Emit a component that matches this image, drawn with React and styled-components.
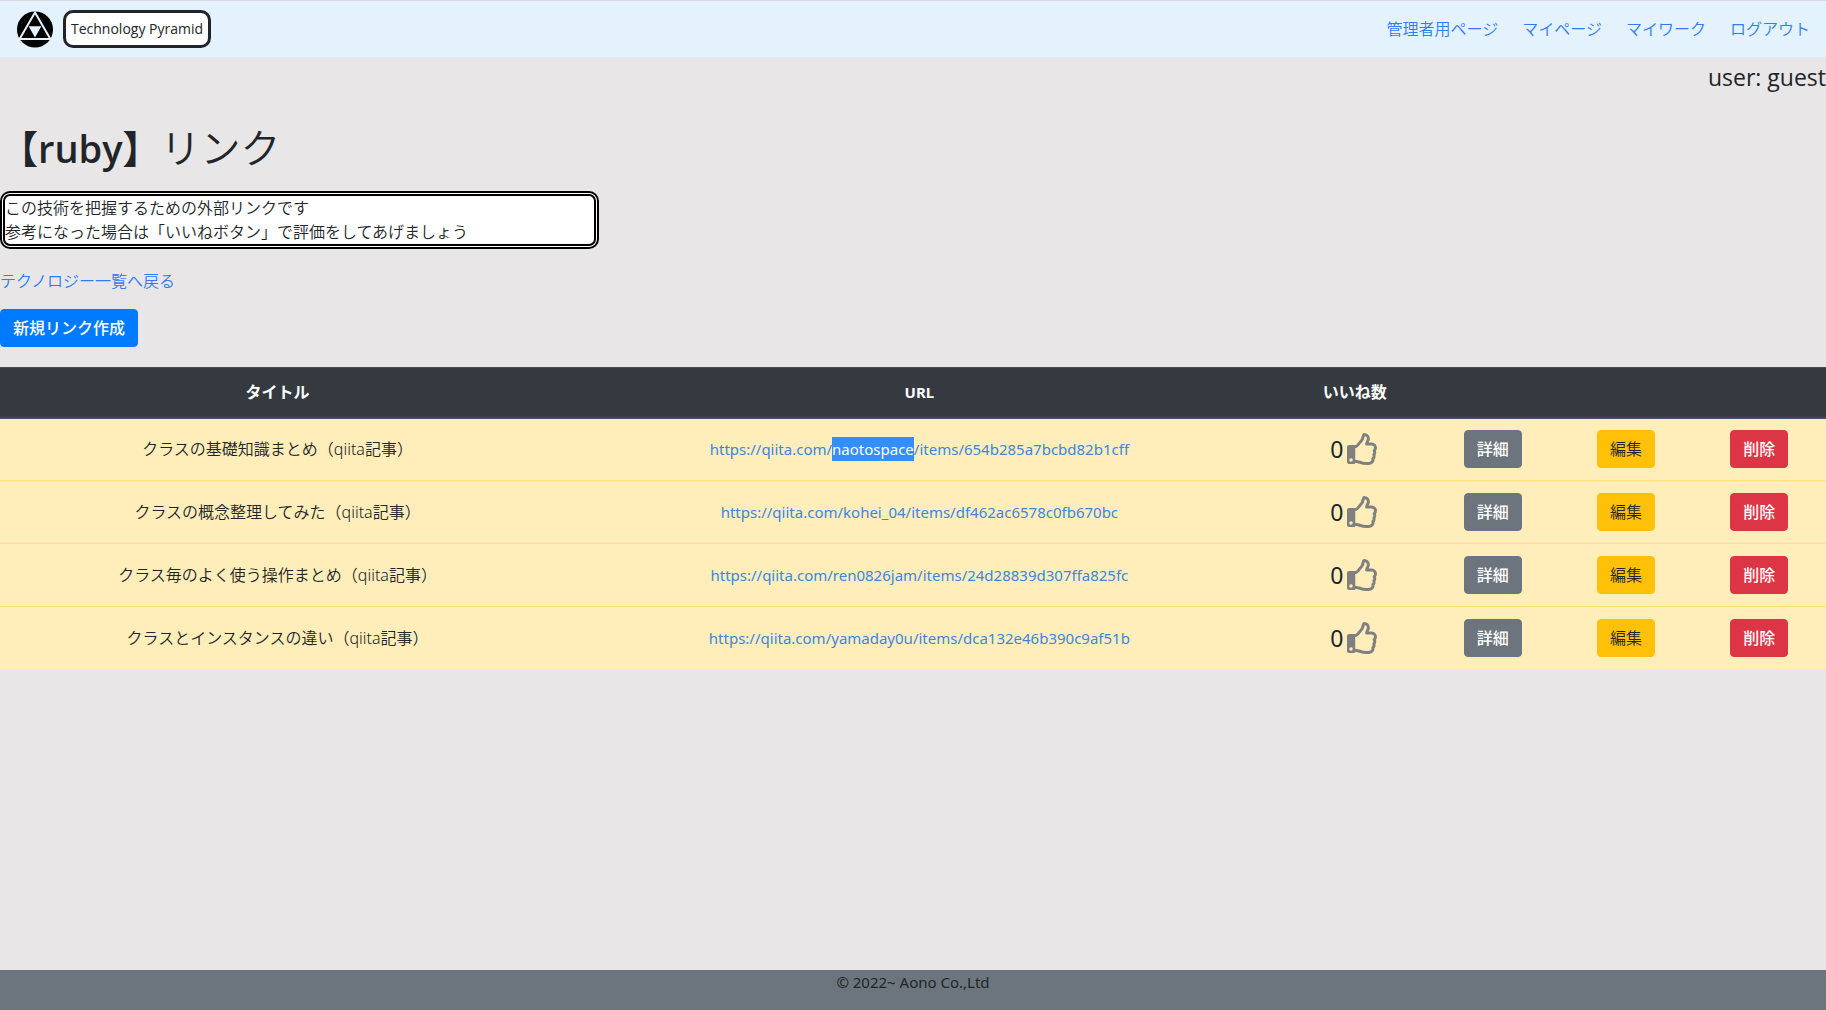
import React from 'react';
import styled, { createGlobalStyle } from 'styled-components';

const GlobalStyle = createGlobalStyle`
	*,
	*::before,
	*::after {
		box-sizing: border-box;
	}
	body {
		margin: 0;
		background: #e8e6e6;
		color: #212529;
		font-family: 'Noto Sans', 'Noto Sans CJK JP', sans-serif;
		font-size: 16px;
		font-weight: 350;
		line-height: 24px;
	}
`;

const Page = styled.div`
	display: flex;
	flex-direction: column;
	min-height: 100vh;
`;

const Navbar = styled.header`
	display: flex;
	align-items: center;
	justify-content: space-between;
	height: 57px;
	padding: 0 16px;
	background: #e3f2fd;
	border-top: 1px solid #d9d9e2;
`;

const Brand = styled.div`
	display: flex;
	align-items: center;
	gap: 10px;
`;

const BrandName = styled.a`
	padding: 4px 5px;
	background: #fff;
	border: 3px solid #212529;
	border-radius: 10px;
	color: #212529;
	font-family: 'Open Sans', sans-serif;
	font-size: 14px;
	font-weight: 400;
	text-decoration: none;
`;

const Nav = styled.nav`
	display: flex;
	gap: 24px;
`;

const Link = styled.a`
	color: ${(props) => (props.$latin ? '#3a86e4' : '#2f7cfb')};
	font-size: ${(props) => (props.$latin ? '15px' : '16px')};
	font-weight: ${(props) => (props.$latin ? 400 : 350)};
	text-decoration: none;
`;

const Main = styled.main`
	flex: 1;
`;

const User = styled.p`
	margin: 0;
	padding-top: 2px;
	font-family: 'Open Sans', sans-serif;
	font-size: 23px;
	font-weight: 400;
	line-height: 36px;
	text-align: right;
`;

const Title = styled.h1`
	margin: 29px 0 19px;
	font-family: 'Open Sans', 'Noto Sans CJK JP', sans-serif;
	font-size: 40px;
	font-weight: 350;
	line-height: 48px;
`;

const Strong = styled.span`
	font-size: 38px;
	font-weight: 600;
`;

const Description = styled.p`
	width: 599px;
	max-width: 100%;
	margin: 0 0 20px;
	background: #fff;
	border: 5px double #000;
	border-radius: 10px;
`;

const Back = styled.p`
	margin: 0 0 16px;
`;

const colors = {
	primary: { bg: '#007bff', text: '#fff' },
	secondary: { bg: '#6c757d', text: '#fff' },
	warning: { bg: '#ffc107', text: '#212529' },
	danger: { bg: '#dc3545', text: '#fff' },
};

const Button = styled.button`
	padding: 6px 12px;
	background: ${(props) => colors[props.$color].bg};
	border: 1px solid ${(props) => colors[props.$color].bg};
	border-radius: 4px;
	color: ${(props) => colors[props.$color].text};
	font: inherit;
	font-weight: ${(props) => (props.$color === 'warning' ? 350 : 500)};
	vertical-align: middle;
	cursor: pointer;
`;

const Table = styled.table`
	width: 100%;
	margin-top: 20px;
	border-collapse: collapse;
	table-layout: fixed;
	text-align: center;
`;

const Col = styled.col`
	width: ${(props) => props.$width};
`;

const Th = styled.th`
	height: 50px;
	padding: 0;
	background: #343a40;
	border-top: 1px solid #454d55;
	border-bottom: 2px solid #454d55;
	color: #fff;
	font-size: ${(props) => (props.$latin ? '15px' : '16px')};
	font-weight: 700;
`;

const Td = styled.td`
	height: 63px;
	padding: 0;
	background: #ffeeba;
	border-top: 1px solid #ffdf7e;
`;

const Likes = styled.div`
	display: flex;
	align-items: center;
	justify-content: center;
	gap: 4px;
	font-size: 23px;
	font-weight: 400;
`;

const LikeButton = styled.button`
	display: flex;
	padding: 0;
	background: none;
	border: 0;
	color: gray;
	cursor: pointer;
`;

const Selected = styled.span`
	display: inline-block;
	background: #338fff;
	color: #fff;
`;

const Footer = styled.footer`
	height: 40px;
	background: #6c757d;
	font-size: 15px;
	font-weight: 400;
	text-align: center;
`;

const navLinks = ['管理者用ページ', 'マイページ', 'マイワーク', 'ログアウト'];

const widths = ['30.4%', '39.9%', '7.8%', '7.3%', '7.3%', '7.3%'];

const links = [
	{
		title: 'クラスの基礎知識まとめ（qiita記事）',
		url: 'https://qiita.com/naotospace/items/654b285a7bcbd82b1cff',
		selected: 'naotospace',
		likes: 0,
	},
	{
		title: 'クラスの概念整理してみた（qiita記事）',
		url: 'https://qiita.com/kohei_04/items/df462ac6578c0fb670bc',
		likes: 0,
	},
	{
		title: 'クラス毎のよく使う操作まとめ（qiita記事）',
		url: 'https://qiita.com/ren0826jam/items/24d28839d307ffa825fc',
		likes: 0,
	},
	{
		title: 'クラスとインスタンスの違い（qiita記事）',
		url: 'https://qiita.com/yamaday0u/items/dca132e46b390c9af51b',
		likes: 0,
	},
];

function Logo() {
	return (
		<svg width="37" height="37" viewBox="-1 -0.5 37 37" aria-hidden="true">
			<circle cx="18" cy="18" r="18" fill="#000" />
			<path
				d="M18 1 L2.6 27.6 H33.4 Z"
				fill="none"
				stroke="#e3f2fd"
				strokeWidth="2"
			/>
			<path d="M11.6 14.8 H24.4 L18 25.9 Z" fill="#e3f2fd" />
		</svg>
	);
}

// thumb outline with a solid cuff
function ThumbIcon() {
	return (
		<svg width="32" height="32" viewBox="0 0 512 512" fill="currentColor">
			<path d="M32 192 H112 A20 20 0 0 1 132 212 V476 A20 20 0 0 1 112 496 H32 A32 32 0 0 1 0 464 V224 A32 32 0 0 1 32 192 Z M64 404 A28 28 0 1 0 64 460 A28 28 0 1 0 64 404 Z" fillRule="evenodd" />
			<path
				d="M118 216 H139 C167 216 207 145 233 119 C262 90 252 43 271 24 C318 24 342 58 342 92 C342 131 314 138 314 176 H394 C432 176 456 206 456 237 C456 256 443 275 434 284 C447 299 450 330 429 350 C441 371 430 399 415 407 C423 456 397 488 340 488 H302 C231 488 180 450 118 450"
				fill="none"
				stroke="currentColor"
				strokeWidth="48"
				strokeLinejoin="round"
			/>
		</svg>
	);
}

function UrlText({ url, selected }) {
	if (!selected) return url;
	const [before, after] = url.split(selected);
	return (
		<>
			{before}
			<Selected>{selected}</Selected>
			{after}
		</>
	);
}

function LinkRow({ data }) {
	return (
		<tr>
			<Td>{data.title}</Td>
			<Td>
				<Link $latin href={data.url}>
					<UrlText url={data.url} selected={data.selected} />
				</Link>
			</Td>
			<Td>
				<Likes>
					{data.likes}
					<LikeButton type="button" aria-label="いいね">
						<ThumbIcon />
					</LikeButton>
				</Likes>
			</Td>
			<Td>
				<Button $color="secondary">詳細</Button>
			</Td>
			<Td>
				<Button $color="warning">編集</Button>
			</Td>
			<Td>
				<Button $color="danger">削除</Button>
			</Td>
		</tr>
	);
}

function App() {
	return (
		<Page>
			<GlobalStyle />
			<Navbar>
				<Brand>
					<Logo />
					<BrandName href="#">Technology Pyramid</BrandName>
				</Brand>
				<Nav>
					{navLinks.map((text) => (
						<Link href="#" key={text}>
							{text}
						</Link>
					))}
				</Nav>
			</Navbar>
			<Main>
				<User>user: guest</User>
				<Title>
					<Strong>【ruby】</Strong>リンク
				</Title>
				<Description>
					この技術を把握するための外部リンクです
					<br />
					参考になった場合は「いいねボタン」で評価をしてあげましょう
				</Description>
				<Back>
					<Link href="#">テクノロジー一覧へ戻る</Link>
				</Back>
				<Button $color="primary">新規リンク作成</Button>
				<Table>
					<colgroup>
						{widths.map((width, index) => (
							<Col $width={width} key={index} />
						))}
					</colgroup>
					<thead>
						<tr>
							<Th>タイトル</Th>
							<Th $latin>URL</Th>
							<Th>いいね数</Th>
							<Th />
							<Th />
							<Th />
						</tr>
					</thead>
					<tbody>
						{links.map((link) => (
							<LinkRow data={link} key={link.url} />
						))}
					</tbody>
				</Table>
			</Main>
			<Footer>© 2022~ Aono Co.,Ltd</Footer>
		</Page>
	);
}

export default App;
